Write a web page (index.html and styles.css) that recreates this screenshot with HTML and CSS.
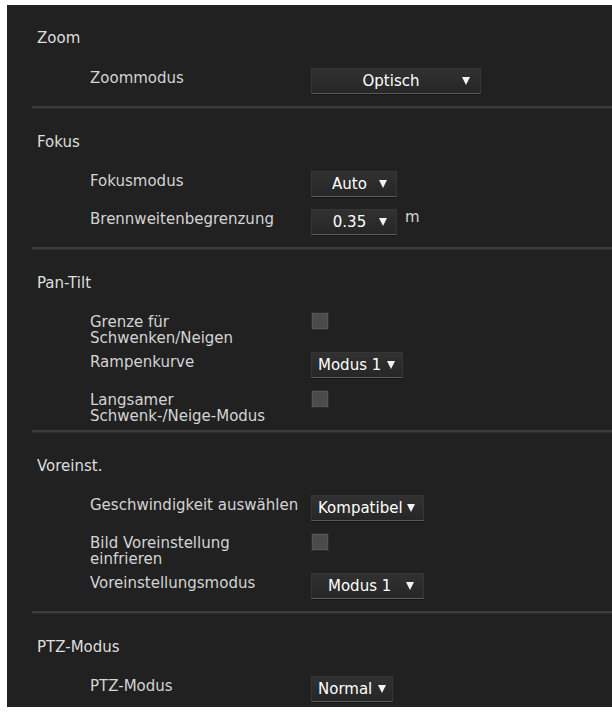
FILE: index.html
```html
<!doctype html>
<html>
<head>
<meta charset="utf-8" />
<title>PTZ-Steuerung</title>
<link rel="stylesheet" href="styles.css">
</head>
<body>
<div class="panel">

	<div class="section">
		<h3>Zoom</h3>
		<div class="row">
			<span class="label">Zoommodus</span>
			<div class="sel sel-wide sel-center"><span>Optisch</span><i class="arrow"></i></div>
		</div>
	</div>

	<div class="section">
		<h3>Fokus</h3>
		<div class="row">
			<span class="label">Fokusmodus</span>
			<div class="sel sel-short sel-center"><span>Auto</span><i class="arrow"></i></div>
		</div>
		<div class="row">
			<span class="label">Brennweitenbegrenzung</span>
			<div class="ctl">
				<div class="sel sel-short sel-center"><span>0.35</span><i class="arrow"></i></div>
				<span class="unit">m</span>
			</div>
		</div>
	</div>

	<div class="section">
		<h3>Pan-Tilt</h3>
		<div class="row tall">
			<span class="label">Grenze für Schwenken/Neigen</span>
			<span class="check"></span>
		</div>
		<div class="row">
			<span class="label">Rampenkurve</span>
			<div class="sel sel-mode"><span>Modus 1</span><i class="arrow"></i></div>
		</div>
		<div class="row tall">
			<!-- non-breaking hyphens keep the second line in one piece -->
			<span class="label">Langsamer Schwenk&#8209;/Neige&#8209;Modus</span>
			<span class="check"></span>
		</div>
	</div>

	<div class="section">
		<h3>Voreinst.</h3>
		<div class="row">
			<span class="label">Geschwindigkeit auswählen</span>
			<div class="sel sel-long"><span>Kompatibel</span><i class="arrow"></i></div>
		</div>
		<div class="row tall">
			<span class="label">Bild Voreinstellung einfrieren</span>
			<span class="check"></span>
		</div>
		<div class="row">
			<span class="label">Voreinstellungsmodus</span>
			<div class="sel sel-long sel-pad"><span>Modus 1</span><i class="arrow"></i></div>
		</div>
	</div>

	<div class="section">
		<h3>PTZ-Modus</h3>
		<div class="row">
			<span class="label">PTZ-Modus</span>
			<div class="sel sel-normal"><span>Normal</span><i class="arrow"></i></div>
		</div>
	</div>

</div>
</body>
</html>
```

FILE: styles.css
```css
*{margin: 0;padding: 0;box-sizing: border-box;}
body{background: #fff;font-family: "DejaVu Sans", Verdana, sans-serif;font-size: 15px;}
.panel{margin: 5px 0 0 7px;height: 702px;overflow: hidden;background: #212121;color: #d4d4d4;}

/* each block is cut from the one above by a groove line */
.section{margin-left: 25px;padding-top: 25px;}
.section + .section{border-top: 2px solid #3c3c3c;box-shadow: inset 0 1px 0 #2c2c2c;}
h3{font-weight: normal;font-size: 15px;line-height: 16px;height: 16px;margin: 0 0 22px 5px;color: #dedede;}
.section + .section h3{margin-top: 1px;margin-bottom: 21px;}

.row{display: grid;grid-template-columns: 221px auto;align-items: start;height: 38px;padding-left: 58px;}
.row.tall{height: 40px;}
.label{display: block;width: 215px;line-height: 16px;padding-top: 2px;}
.ctl{display: flex;align-items: flex-start;}
.unit{line-height: 16px;margin: 0 0 0 8px;color: #d4d4d4;}

/* dropdowns */
.sel{display: flex;align-items: center;height: 26px;padding: 0 9px 0 6px;color: #fff;
	background: linear-gradient(#313131, #262626);border: 1px solid #363636;border-bottom: 1px solid #5c5c5c;
	box-shadow: 0 1px 0 #151515;}
.sel span{flex: 1;white-space: nowrap;}
.sel-center span{text-align: center;padding-left: 6px;}
.sel-wide{width: 170px;padding-right: 10px;}
.sel-short{width: 86px;}
.sel-mode{width: 92px;padding-right: 7px;}
.sel-long{width: 113px;padding-right: 9px;}
.sel-pad{padding-left: 16px;}
.sel-normal{width: 82px;padding-right: 6px;}
.arrow{display: block;width: 0;height: 0;margin-left: 4px;
	border-left: 4px solid transparent;border-right: 4px solid transparent;border-top: 8px solid #f2f2f2;}

.check{display: block;width: 18px;height: 18px;background: #4b4b4b;border: 1px solid #2e2e2e;
	box-shadow: inset 0 0 0 1px #555;}
```
